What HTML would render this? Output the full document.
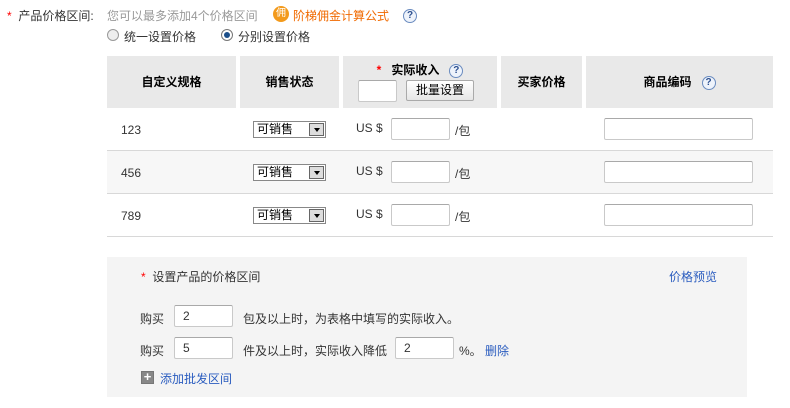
<!DOCTYPE html>
<html><head><meta charset="utf-8"><style>
*{margin:0;padding:0;box-sizing:border-box}
body{width:790px;height:408px;background:#fff;font-family:"Liberation Sans","Noto Sans CJK SC",sans-serif;font-size:12px;color:#333;position:relative;overflow:hidden}
.a{position:absolute;white-space:nowrap}
.star{color:#f00}
.hd{position:absolute;top:56px;height:52px;background:#e9e9e9;font-weight:bold;color:#000;text-align:center;line-height:52px}
.q{display:inline-block;width:14px;height:14px;border-radius:50%;border:1px solid #6a8bbf;background:#eef3fb;color:#2b4f8f;font-size:10px;line-height:12px;text-align:center;font-weight:bold;vertical-align:middle}
.inp{position:absolute;background:#fff;border:1px solid #c9c9c9;border-top-color:#a9a9a9;border-radius:2px}
.row{position:absolute;left:107px;width:666px;border-bottom:1px solid #d8d8d8}
.sel{position:absolute;width:73px;height:17px;border:1px solid #888;background:#fff;font-size:12px;line-height:15px;padding-left:3px;color:#000}
.sel i{position:absolute;right:1px;top:1px;width:15px;height:13px;border:1px solid #666;background:#ddd}
.sel i:after{content:"";position:absolute;left:4px;top:4px;border:3px solid transparent;border-top:4px solid #000}
.link{color:#2a5cbf}
</style></head><body>
<div class="a" style="left:7px;top:7px"><span class="star">*</span>&nbsp; 产品价格区间:</div>
<div class="a" style="left:107px;top:7px;color:#999">您可以最多添加4个价格区间</div>
<div class="a" style="left:273px;top:6px;width:16px;height:16px;border-radius:50%;background:#f39a1c;color:#fff;font-size:10px;text-align:center;line-height:16px">佣</div>
<div class="a" style="left:293px;top:7px;color:#f06a00">阶梯佣金计算公式</div>
<div class="a" style="left:403px;top:8px"><span class="q">?</span></div>
<div class="a" style="left:107px;top:29px;width:12px;height:12px;border-radius:50%;border:1px solid #999;background:#eee"></div>
<div class="a" style="left:124px;top:28px">统一设置价格</div>
<div class="a" style="left:221px;top:29px;width:12px;height:12px;border-radius:50%;border:1px solid #777;background:#fff"><div style="margin:2px;width:6px;height:6px;border-radius:50%;background:#1c4f8a"></div></div>
<div class="a" style="left:238px;top:28px">分别设置价格</div>

<div class="hd" style="left:107px;width:129px">自定义规格</div>
<div class="hd" style="left:240px;width:99px">销售状态</div>
<div class="hd" style="left:343px;width:154px;line-height:16px;padding-top:6px"><span class="star">*</span>&nbsp;&nbsp; 实际收入 &nbsp;&nbsp;<span class="q">?</span></div>
<div class="inp" style="left:358px;top:80px;width:39px;height:22px"></div>
<div class="a" style="left:406px;top:80px;width:68px;height:21px;border:1px solid #aaa;border-radius:2px;background:linear-gradient(#fff,#e6e6e6);text-align:center;line-height:19px;color:#000">批量设置</div>
<div class="hd" style="left:501px;width:81px">买家价格</div>
<div class="hd" style="left:586px;width:187px">商品编码 &nbsp;&nbsp;<span class="q">?</span></div>

<div class="row" style="top:108px;height:43px"></div>
<div class="row" style="top:151px;height:43px;background:#f7f7f7"></div>
<div class="row" style="top:194px;height:43px"></div>

<div class="a" style="left:121px;top:123px">123</div>
<div class="a" style="left:121px;top:166px">456</div>
<div class="a" style="left:121px;top:209px">789</div>
<div class="sel" style="left:253px;top:121px">可销售<i></i></div>
<div class="sel" style="left:253px;top:164px">可销售<i></i></div>
<div class="sel" style="left:253px;top:207px">可销售<i></i></div>
<div class="a" style="left:356px;top:121px">US $</div>
<div class="a" style="left:356px;top:164px">US $</div>
<div class="a" style="left:356px;top:207px">US $</div>
<div class="inp" style="left:391px;top:118px;width:59px;height:22px"></div>
<div class="inp" style="left:391px;top:161px;width:59px;height:22px"></div>
<div class="inp" style="left:391px;top:204px;width:59px;height:22px"></div>
<div class="a" style="left:455px;top:122px">/包</div>
<div class="a" style="left:455px;top:165px">/包</div>
<div class="a" style="left:455px;top:208px">/包</div>
<div class="inp" style="left:604px;top:118px;width:149px;height:22px"></div>
<div class="inp" style="left:604px;top:161px;width:149px;height:22px"></div>
<div class="inp" style="left:604px;top:204px;width:149px;height:22px"></div>

<div class="a" style="left:107px;top:257px;width:640px;height:140px;background:#f4f4f4"></div>
<div class="a" style="left:141px;top:268px"><span class="star">*</span>&nbsp; 设置产品的价格区间</div>
<div class="a link" style="left:669px;top:268px">价格预览</div>
<div class="a" style="left:140px;top:310px">购买</div>
<div class="inp" style="left:174px;top:305px;width:59px;height:22px;padding:3px 8px">2</div>
<div class="a" style="left:243px;top:310px">包及以上时，为表格中填写的实际收入。</div>
<div class="a" style="left:140px;top:342px">购买</div>
<div class="inp" style="left:174px;top:337px;width:59px;height:22px;padding:3px 8px">5</div>
<div class="a" style="left:243px;top:342px">件及以上时，实际收入降低</div>
<div class="inp" style="left:395px;top:337px;width:59px;height:22px;padding:3px 8px">2</div>
<div class="a" style="left:459px;top:342px">%。 <span class="link">删除</span></div>
<div class="a" style="left:141px;top:371px;width:13px;height:13px;background:#888;border:1px solid #777;color:#fff;font-size:13px;line-height:10px;text-align:center;font-weight:bold">+</div>
<div class="a link" style="left:160px;top:370px">添加批发区间</div>
</body></html>
